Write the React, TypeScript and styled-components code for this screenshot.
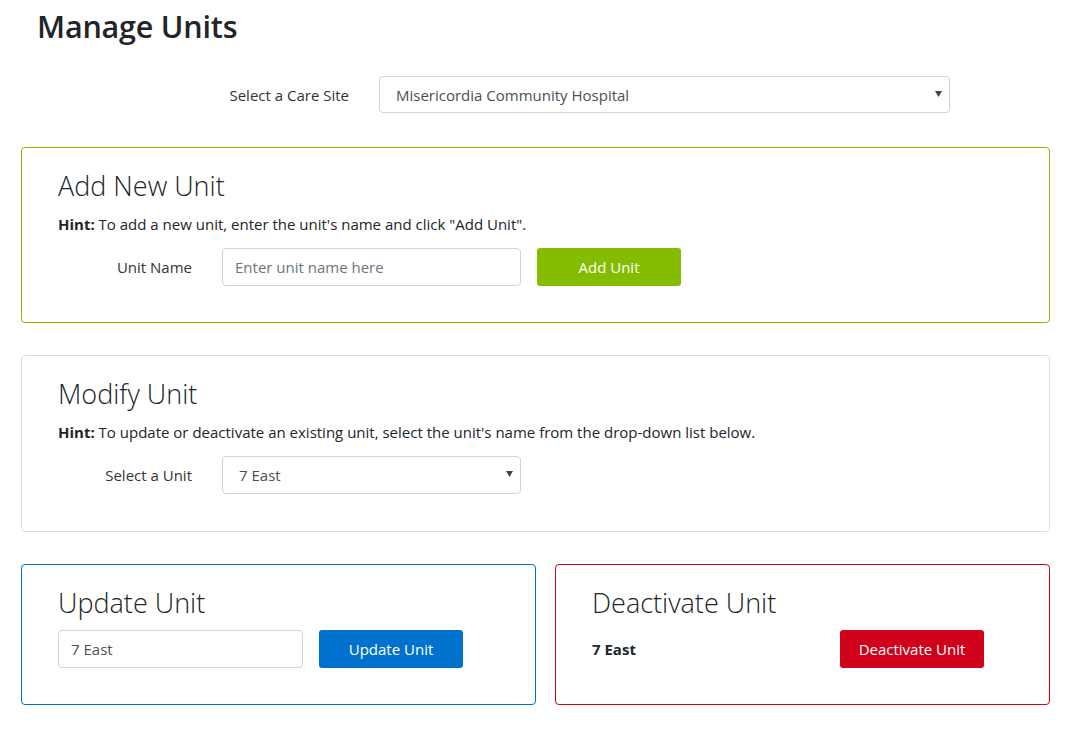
import React from 'react';
import styled, { createGlobalStyle } from 'styled-components';

const GlobalStyle = createGlobalStyle`
  body {
    margin: 0;
    background: #fff;
    font-family: "Open Sans", "Noto Sans", sans-serif;
    color: #212529;
  }
  * { box-sizing: border-box; }
`;

const Page = styled.div`
  padding: 0 27px 30px 21px;
`;

const PageTitle = styled.h1`
  margin: 6px 0 30px 16px;
  font-size: 30.5px;
  line-height: 40px;
  font-weight: 600;
  color: #212529;
  letter-spacing: -0.2px;
`;

const SiteRow = styled.div`
  display: grid;
  grid-template-columns: 328px 571px;
  column-gap: 30px;
  align-items: center;
  margin-bottom: 34px;
`;

const Label = styled.label`
  font-size: 15px;
  color: #333;
  text-align: right;
`;

const Card = styled.section<{ $accent: string; $pb?: number }>`
  border: 1px solid ${(p) => p.$accent};
  border-radius: 4px;
  padding: 22px 36px ${(p) => p.$pb ?? 36}px;
  margin-bottom: 32px;
`;

const CardTitle = styled.h2<{ $tight?: boolean }>`
  margin: 0 0 ${(p) => (p.$tight ? '11px' : '12px')};
  font-size: 27px;
  line-height: 32px;
  font-weight: 300;
  color: #212529;
`;

const Hint = styled.p`
  margin: 0 0 14px;
  font-size: 15px;
  line-height: 20px;
  color: #212529;

  strong { font-weight: 700; }
`;

const FormRow = styled.div`
  display: grid;
  grid-template-columns: 134px 299px 144px;
  column-gap: 30px;
  align-items: center;

  & > :nth-child(3) { margin-left: -14px; }
`;

const Input = styled.input`
  width: 100%;
  height: 38px;
  padding: 0 12px;
  border: 1px solid #ced4da;
  border-radius: 4px;
  font-family: inherit;
  font-size: 15px;
  color: #495057;
  outline: none;

  &::placeholder { color: #6c757d; }
`;

const SelectWrap = styled.div`
  position: relative;
  width: 100%;
`;

const Select = styled.select<{ $h: number }>`
  width: 100%;
  height: ${(p) => p.$h}px;
  padding: 0 28px 0 16px;
  border: 1px solid #ced4da;
  border-radius: 4px;
  background: #fff;
  font-family: inherit;
  font-size: 15px;
  color: #495057;
  appearance: none;
  -webkit-appearance: none;
  outline: none;
`;

const Caret = styled.svg`
  position: absolute;
  right: 8px;
  top: 50%;
  margin-top: -4px;
  pointer-events: none;
`;

const Button = styled.button<{ $bg: string }>`
  height: 38px;
  width: 144px;
  border: none;
  border-radius: 3px;
  background: ${(p) => p.$bg};
  color: #fff;
  font-family: inherit;
  font-size: 15px;
  cursor: pointer;
`;

const Split = styled.div`
  display: grid;
  grid-template-columns: 515px 495px;
  column-gap: 19px;

  & > section { margin-bottom: 0; }
`;

const ActionRow = styled.div<{ $first: number }>`
  display: grid;
  grid-template-columns: ${(p) => p.$first}px 144px;
  column-gap: 16px;
  align-items: center;
`;

const UnitName = styled.span`
  font-size: 15px;
  font-weight: 700;
  color: #212529;
`;

const CaretIcon = () => (
  <Caret width="7" height="6" viewBox="0 0 7 6">
    <path d="M0 0 H7 L3.5 6 Z" fill="#444" />
  </Caret>
);

const DropDown: React.FC<{ value: string; h: number }> = ({ value, h }) => (
  <SelectWrap>
    <Select $h={h} defaultValue={value}>
      <option>{value}</option>
    </Select>
    <CaretIcon />
  </SelectWrap>
);

const App: React.FC = () => {
  return (
    <>
      <GlobalStyle />
      <Page>
        <PageTitle>Manage Units</PageTitle>

        <SiteRow>
          <Label>Select a Care Site</Label>
          <DropDown value="Misericordia Community Hospital" h={37} />
        </SiteRow>

        <Card $accent="#84bd00">
          <CardTitle>Add New Unit</CardTitle>
          <Hint>
            <strong>Hint:</strong> To add a new unit, enter the unit's name and click "Add Unit".
          </Hint>
          <FormRow>
            <Label>Unit Name</Label>
            <Input placeholder="Enter unit name here" />
            <Button $bg="#84bd00">Add Unit</Button>
          </FormRow>
        </Card>

        <Card $accent="#dedede" $pb={37}>
          <CardTitle>Modify Unit</CardTitle>
          <Hint>
            <strong>Hint:</strong> To update or deactivate an existing unit, select the unit's name from the drop-down list below.
          </Hint>
          <FormRow>
            <Label>Select a Unit</Label>
            <DropDown value="7 East" h={38} />
          </FormRow>
        </Card>

        <Split>
          <Card $accent="#0072ce">
            <CardTitle $tight>Update Unit</CardTitle>
            <ActionRow $first={245}>
              <Input defaultValue="7 East" />
              <Button $bg="#0072ce">Update Unit</Button>
            </ActionRow>
          </Card>
          <Card $accent="#d0021b">
            <CardTitle $tight>Deactivate Unit</CardTitle>
            <ActionRow $first={232}>
              <UnitName>7 East</UnitName>
              <Button $bg="#d0021b">Deactivate Unit</Button>
            </ActionRow>
          </Card>
        </Split>
      </Page>
    </>
  );
};

export default App;
